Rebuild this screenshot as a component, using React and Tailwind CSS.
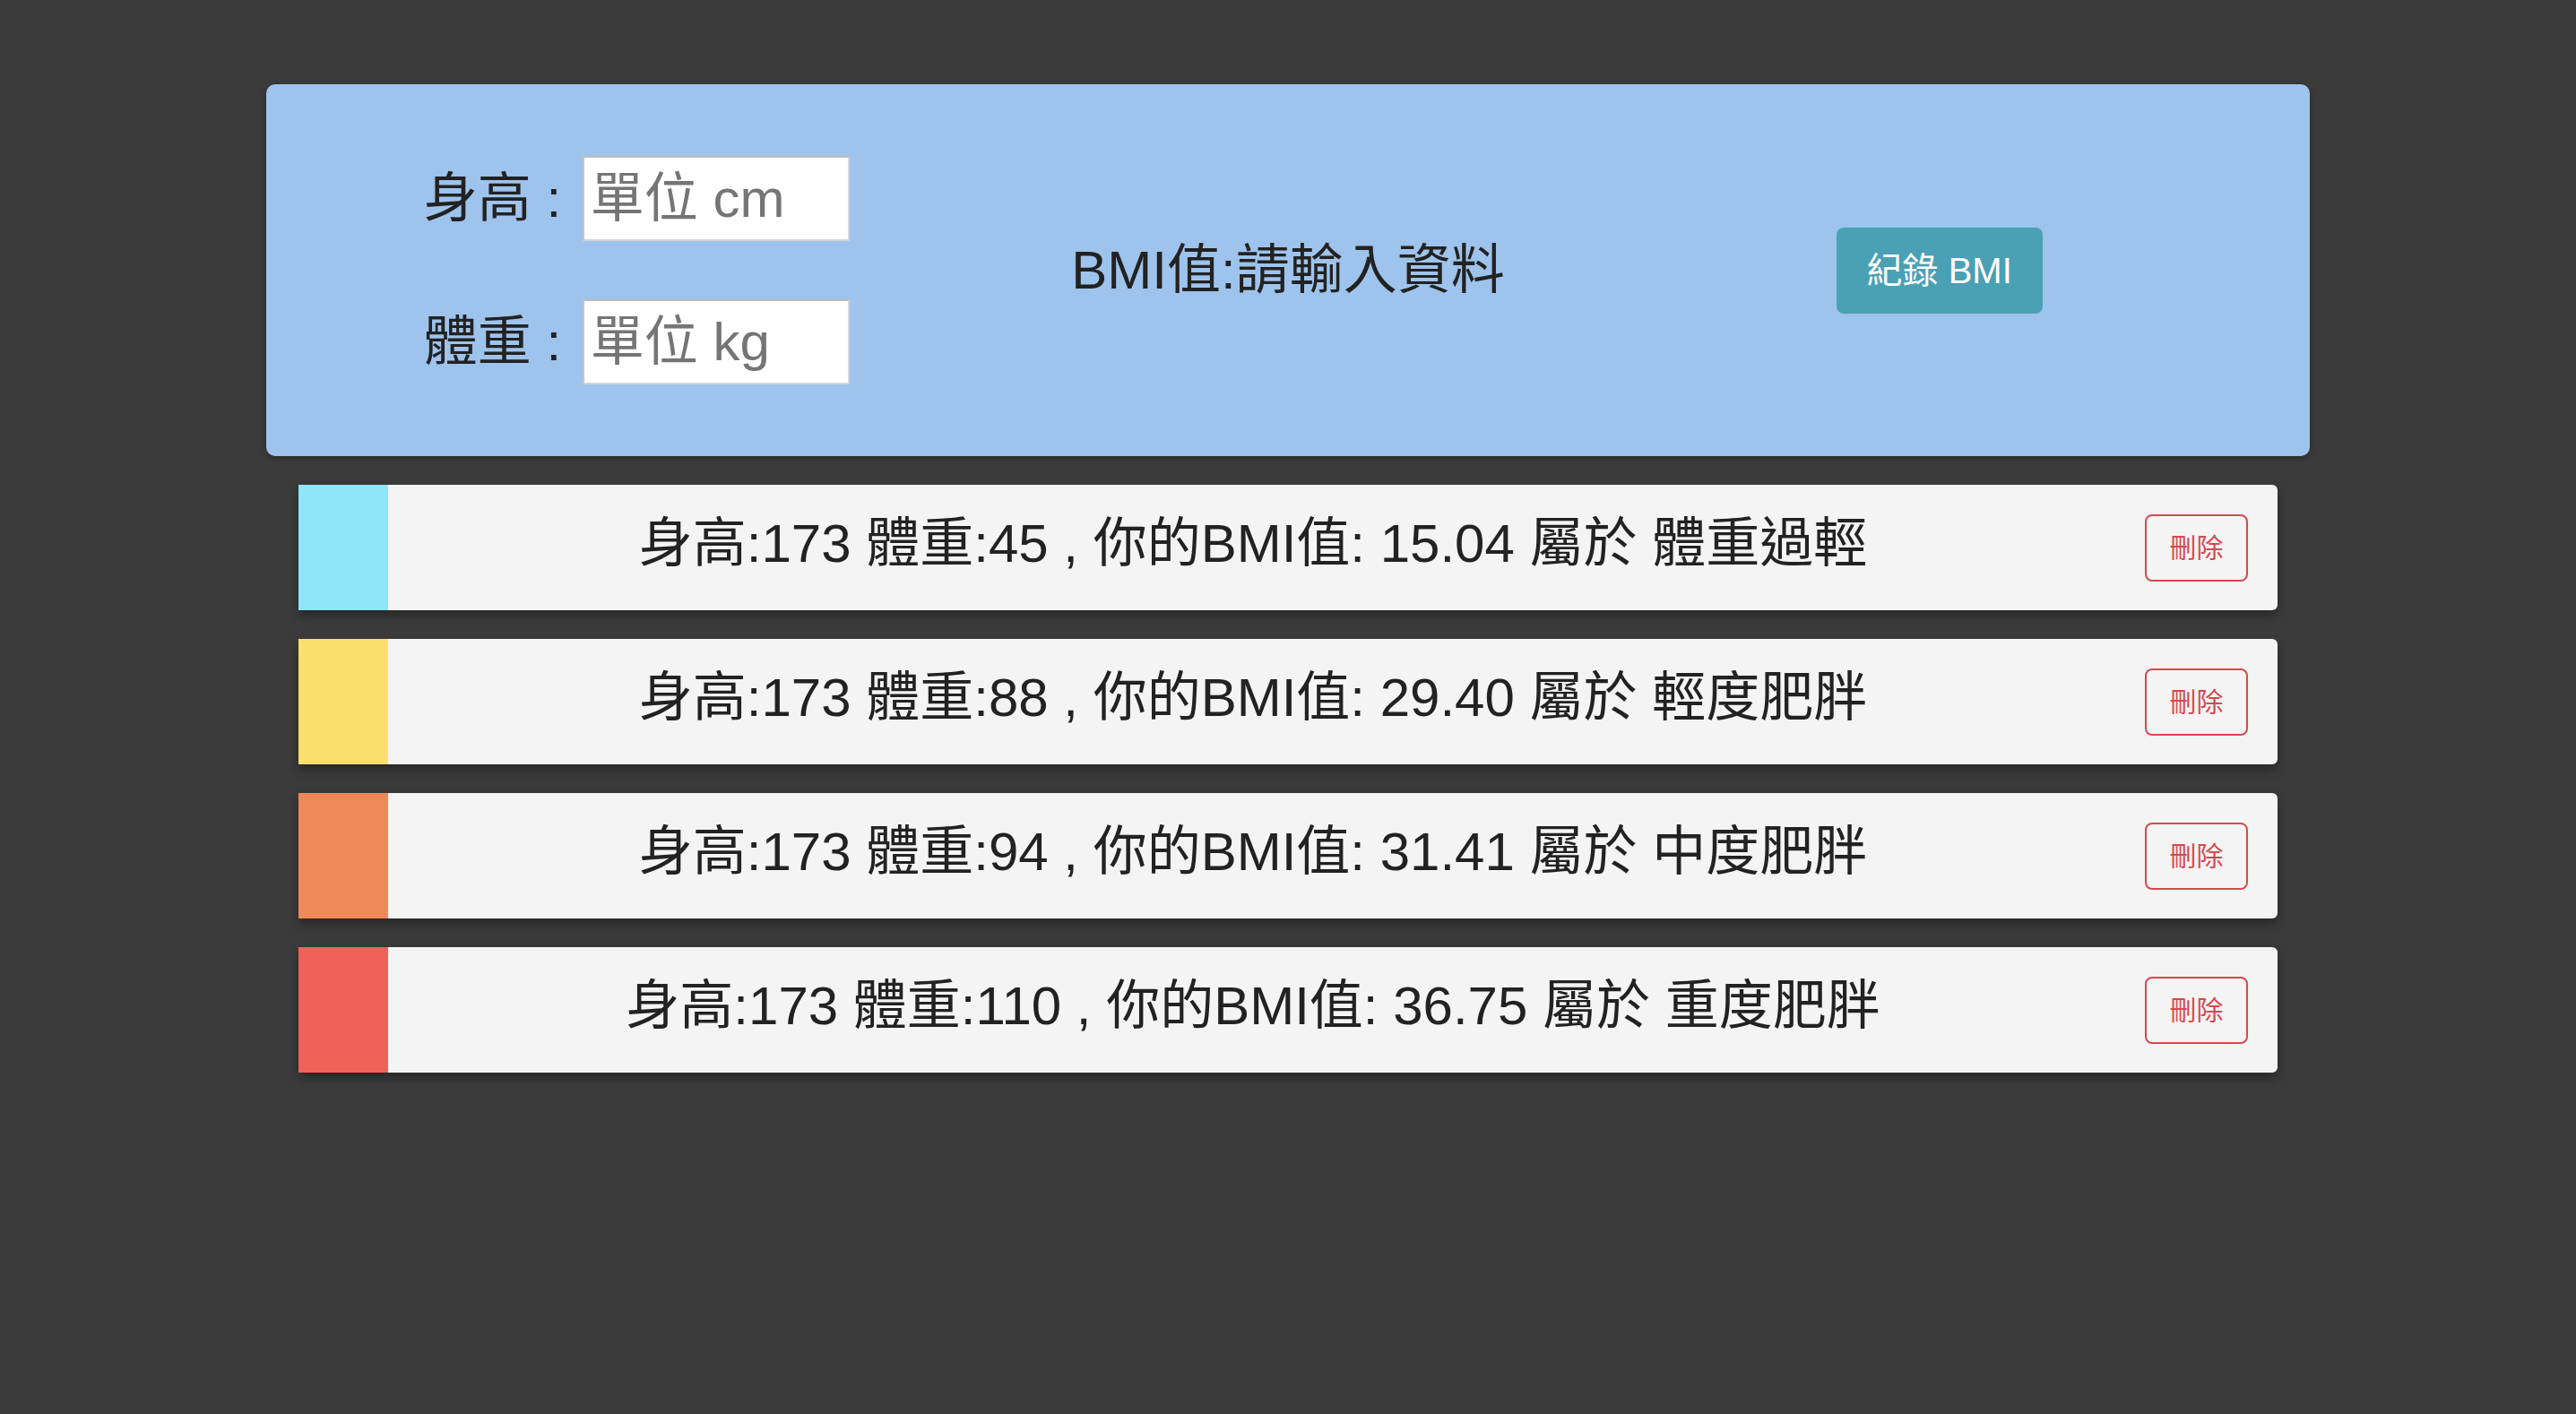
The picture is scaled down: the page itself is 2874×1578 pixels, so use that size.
import { useState } from "react";

const records = [
  { h: 173, w: 45, bmi: "15.04", status: "體重過輕", color: "bg-[#8ee6f9]" },
  { h: 173, w: 88, bmi: "29.40", status: "輕度肥胖", color: "bg-[#fbdf6e]" },
  { h: 173, w: 94, bmi: "31.41", status: "中度肥胖", color: "bg-[#f0895a]" },
  { h: 173, w: 110, bmi: "36.75", status: "重度肥胖", color: "bg-[#ee625a]" },
];

const App = () => {
  const [height, setHeight] = useState("");
  const [weight, setWeight] = useState("");

  return (
    <div className="min-h-screen bg-[#3b3b3b] pt-[94px] font-['Liberation_Sans','Noto_Sans_CJK_TC',sans-serif] text-[#222]">
      <div className="mx-auto grid w-[2280px] grid-cols-3 items-center rounded-[10px] bg-[#9ec3ec] px-[50px] py-[80px] shadow-[0_2px_6px_rgba(0,0,0,0.35)]">
        <div className="flex flex-col items-center gap-[65px]">
          <label className="flex items-center text-[60px] leading-none">
            <span className="w-[177px]">身高 :</span>
            <input
              value={height}
              onChange={(e) => setHeight(e.target.value)}
              placeholder="單位 cm"
              className="h-[95px] w-[298px] border-2 border-[#d4d4d4] border-t-[#bdbdbd] border-l-[#c4c4c4] bg-white px-[7px] text-[60px] text-[#222] outline-none placeholder:text-[#757575]"
            />
          </label>
          <label className="flex items-center text-[60px] leading-none">
            <span className="w-[177px]">體重 :</span>
            <input
              value={weight}
              onChange={(e) => setWeight(e.target.value)}
              placeholder="單位 kg"
              className="h-[95px] w-[298px] border-2 border-[#d4d4d4] border-t-[#bdbdbd] border-l-[#c4c4c4] bg-white px-[7px] text-[60px] text-[#222] outline-none placeholder:text-[#757575]"
            />
          </label>
        </div>
        <div className="text-center text-[60px] leading-none">BMI值:請輸入資料</div>
        <div className="flex justify-center">
          <button className="h-[96px] w-[230px] rounded-[8px] bg-[#4aa0b4] text-[40px] text-white">
            紀錄 BMI
          </button>
        </div>
      </div>

      <div className="mx-auto mt-[32px] flex w-[2208px] flex-col gap-[32px]">
        {records.map((r, i) => (
          <div
            key={i}
            className="flex h-[140px] items-center rounded-r-[6px] bg-[#f4f4f4] shadow-[0_6px_12px_rgba(0,0,0,0.35)]"
          >
            <div className={`h-full w-[100px] ${r.color}`}></div>
            <div className="flex-1 pb-[8px] text-center text-[60px] leading-none">
              身高:{r.h} 體重:{r.w} , 你的BMI值: {r.bmi} 屬於 {r.status}
            </div>
            <button className="ml-[30px] mr-[33px] h-[75px] w-[115px] rounded-[8px] border-2 border-[#d7484e] text-[30px] text-[#d7484e]">
              刪除
            </button>
          </div>
        ))}
      </div>
    </div>
  );
};

export default App;
